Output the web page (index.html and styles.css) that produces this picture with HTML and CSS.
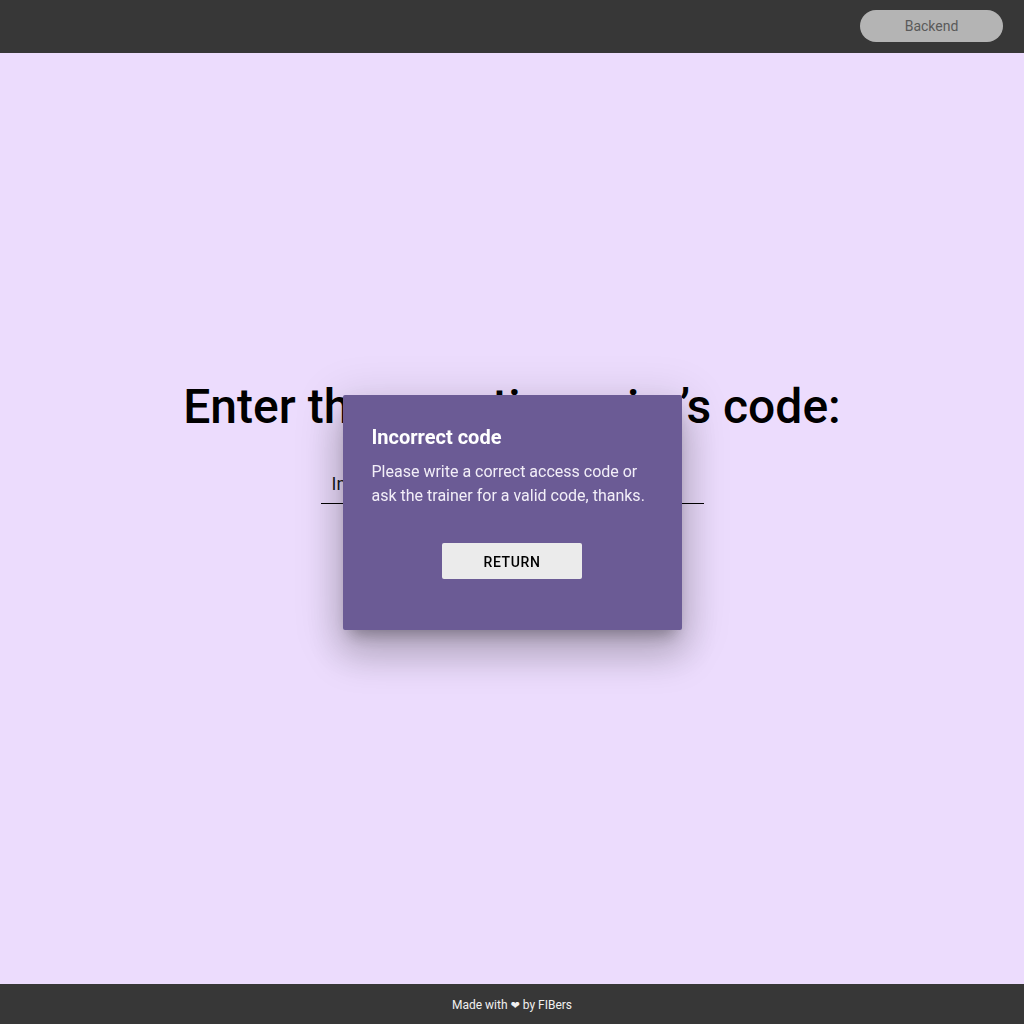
FILE: index.html
```html
<!DOCTYPE html>
<html lang="en">
<head>
<meta charset="utf-8">
<title>Enter code</title>
<link rel="stylesheet" href="styles.css">
</head>
<body>
<div class="page">
  <header class="topbar">
    <button class="backend-btn" type="button">Backend</button>
  </header>
  <main class="main">
    <h1 class="heading">Enter the questionnaire’s code:</h1>
    <div class="field">
      <input class="code-input" type="text" placeholder="Insert the code">
    </div>
  </main>
  <footer class="footer">Made with <span class="heart">❤</span> by FIBers</footer>
</div>
<div class="overlay">
  <div class="dialog" role="dialog">
    <h2 class="dialog-title">Incorrect code</h2>
    <p class="dialog-text">Please write a correct access code or ask the trainer for a valid code, thanks.</p>
    <div class="dialog-actions">
      <button class="return-btn" type="button">RETURN</button>
    </div>
  </div>
</div>
</body>
</html>
```
FILE: styles.css
```css
html, body {
  margin: 0;
  padding: 0;
}
body {
  font-family: Roboto, "Liberation Sans", Arial, sans-serif;
  background: #ecdcfd;
}
.page {
  height: 100vh;
  display: flex;
  flex-direction: column;
}
.topbar {
  box-sizing: border-box;
  height: 53px;
  flex: 0 0 53px;
  background: #373737;
  display: flex;
  align-items: flex-start;
  justify-content: flex-end;
  padding: 10px 21px 0;
}
.backend-btn {
  width: 143px;
  height: 32px;
  border: none;
  border-radius: 16px;
  background: #b4b4b4;
  color: #5a5a5a;
  font-family: Roboto, "Liberation Sans", Arial, sans-serif;
  font-size: 14px;
  padding: 0 0 1px;
  margin: 0;
}
.main {
  flex: 1;
  display: flex;
  flex-direction: column;
  align-items: center;
  padding-top: 325px;
}
.heading {
  margin: 0;
  font-size: 48px;
  line-height: 58px;
  font-weight: 500;
  color: #000;
  white-space: nowrap;
}
.field {
  margin-top: 30px;
  width: 383px;
}
.code-input {
  box-sizing: border-box;
  width: 100%;
  padding: 7px 11px 9px;
  line-height: 21px;
  height: 38px;
  font-family: Roboto, "Liberation Sans", Arial, sans-serif;
  font-size: 18px;
  color: #111;
  background: transparent;
  border: none;
  border-bottom: 1px solid #000;
  outline: none;
}
.code-input::placeholder {
  color: #1a1a1a;
  opacity: 1;
}
.footer {
  box-sizing: border-box;
  height: 40px;
  flex: 0 0 40px;
  background: #373737;
  color: #f0f0f0;
  font-size: 12px;
  display: flex;
  align-items: center;
  justify-content: center;
  white-space: pre;
  padding-top: 2px;
}
.heart {
  font-family: "DejaVu Sans", sans-serif;
  font-size: 11px;
}
.overlay {
  position: fixed;
  inset: 0;
  display: flex;
  align-items: center;
  justify-content: center;
}
.dialog {
  box-sizing: border-box;
  width: 339px;
  height: 235px;
  padding: 30px 29px 0;
  background: #6b5b95;
  border-radius: 2px;
  color: #fff;
  box-shadow: 0 11px 15px -7px rgba(0,0,0,0.3), 0 24px 38px 3px rgba(0,0,0,0.18), 0 9px 46px 8px rgba(0,0,0,0.12);
}
.dialog-title {
  margin: 0;
  font-size: 20px;
  line-height: 24px;
  font-weight: 700;
}
.dialog-text {
  margin: 11px 0 0;
  font-size: 16px;
  line-height: 24px;
  color: #f2eef8;
}
.dialog-actions {
  display: flex;
  justify-content: center;
  margin-top: 35px;
}
.return-btn {
  width: 140px;
  height: 36px;
  border: none;
  border-radius: 2px;
  background: #ebebeb;
  color: #000;
  font-family: Roboto, "Liberation Sans", Arial, sans-serif;
  font-size: 14px;
  font-weight: 500;
  letter-spacing: 0.6px;
  padding: 2px 0 0;
}
```
